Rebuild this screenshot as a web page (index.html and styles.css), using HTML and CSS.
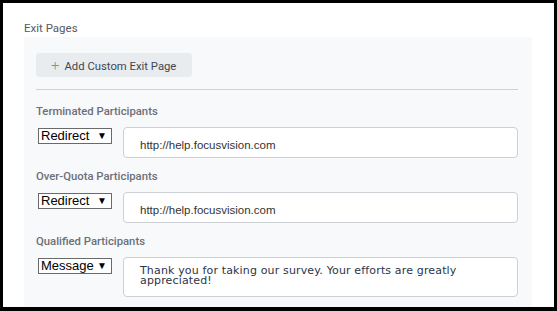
FILE: index.html
```html
<!DOCTYPE html>
<html lang="en">
<head>
    <meta charset="UTF-8">
    <title>Exit Pages</title>
    <link rel="stylesheet" href="styles.css">
</head>
<body>
    <div class="frame">
        <div class="section-title">Exit Pages</div>

        <div class="panel">
            <button class="add-btn"><span class="plus">+</span>Add Custom Exit Page</button>
            <div class="divider"></div>

            <div class="exit-row">
                <div class="exit-label">Terminated Participants</div>
                <div class="exit-fields">
                    <div class="fake-select">Redirect<span class="arrow">▼</span></div>
                    <div class="url-input">http://help.focusvision.com</div>
                </div>
            </div>

            <div class="exit-row">
                <div class="exit-label">Over-Quota Participants</div>
                <div class="exit-fields">
                    <div class="fake-select">Redirect<span class="arrow">▼</span></div>
                    <div class="url-input">http://help.focusvision.com</div>
                </div>
            </div>

            <div class="exit-row">
                <div class="exit-label">Qualified Participants</div>
                <div class="exit-fields">
                    <div class="fake-select">Message<span class="arrow">▼</span></div>
                    <div class="msg-input">Thank you for taking our survey. Your efforts are greatly appreciated!</div>
                </div>
            </div>
        </div>
    </div>
</body>
</html>
```

FILE: styles.css
```css
body {
    margin: 0;
    background: #000;
    font-family: Roboto, "Liberation Sans", Arial, sans-serif;
}
.frame {
    box-sizing: border-box;
    width: 557px;
    height: 311px;
    border: 3px solid #000;
    border-bottom-width: 4px;
    background: #fff;
    padding: 16px 0 0 21px;
    overflow: hidden;
}
.section-title {
    font-size: 11.5px;
    line-height: 18px;
    color: #555a60;
}
.panel {
    width: 508px;
    height: 300px;
    box-sizing: border-box;
    background: #f8f9fb;
    border-radius: 3px 3px 0 0;
    padding: 16px 14px 0 12px;
}
.add-btn {
    display: block;
    width: 156px;
    height: 24px;
    border: none;
    border-radius: 3px;
    background: #e9ecef;
    color: #3f4650;
    font-family: Roboto, sans-serif;
    font-size: 11.3px;
    padding: 0 0 0 15px;
    text-align: left;
}
.plus {
    color: #8a9098;
    font-size: 15px;
    margin-right: 5px;
    font-weight: 300;
}
.divider {
    height: 1px;
    background: #cfd2d6;
    margin: 12px 0 14px 0;
}
.exit-row {
    margin-bottom: 11px;
}
.exit-label {
    font-size: 11.3px;
    line-height: 16px;
    font-weight: 500;
    color: #6b7078;
    margin-bottom: 7px;
}
.exit-fields {
    display: flex;
    align-items: flex-start;
}
.fake-select {
    box-sizing: border-box;
    width: 74px;
    height: 16px;
    margin: 1px 11px 0 2px;
    border: 1px solid #6a6a6a;
    background: #fff;
    font-family: "Liberation Sans", Arial, sans-serif;
    font-size: 13px;
    line-height: 14px;
    color: #000;
    padding-left: 2px;
    position: relative;
}
.arrow {
    position: absolute;
    right: 4px;
    top: 0;
    font-size: 10px;
}
.url-input,
.msg-input {
    box-sizing: border-box;
    flex: 1;
    background: #fff;
    border: 1px solid #cdd0d4;
    border-radius: 4px;
}
.url-input {
    height: 31px;
    padding: 9px 16px 0 16px;
    font-family: "Liberation Sans", Arial, sans-serif;
    font-size: 11.5px;
    line-height: 16px;
    color: #333;
}
.msg-input {
    height: 40px;
    padding: 8px 16px 0 16px;
    font-family: "DejaVu Sans", Verdana, sans-serif;
    font-size: 11px;
    line-height: 10px;
    letter-spacing: 0.15px;
    color: #2c3548;
}
```
